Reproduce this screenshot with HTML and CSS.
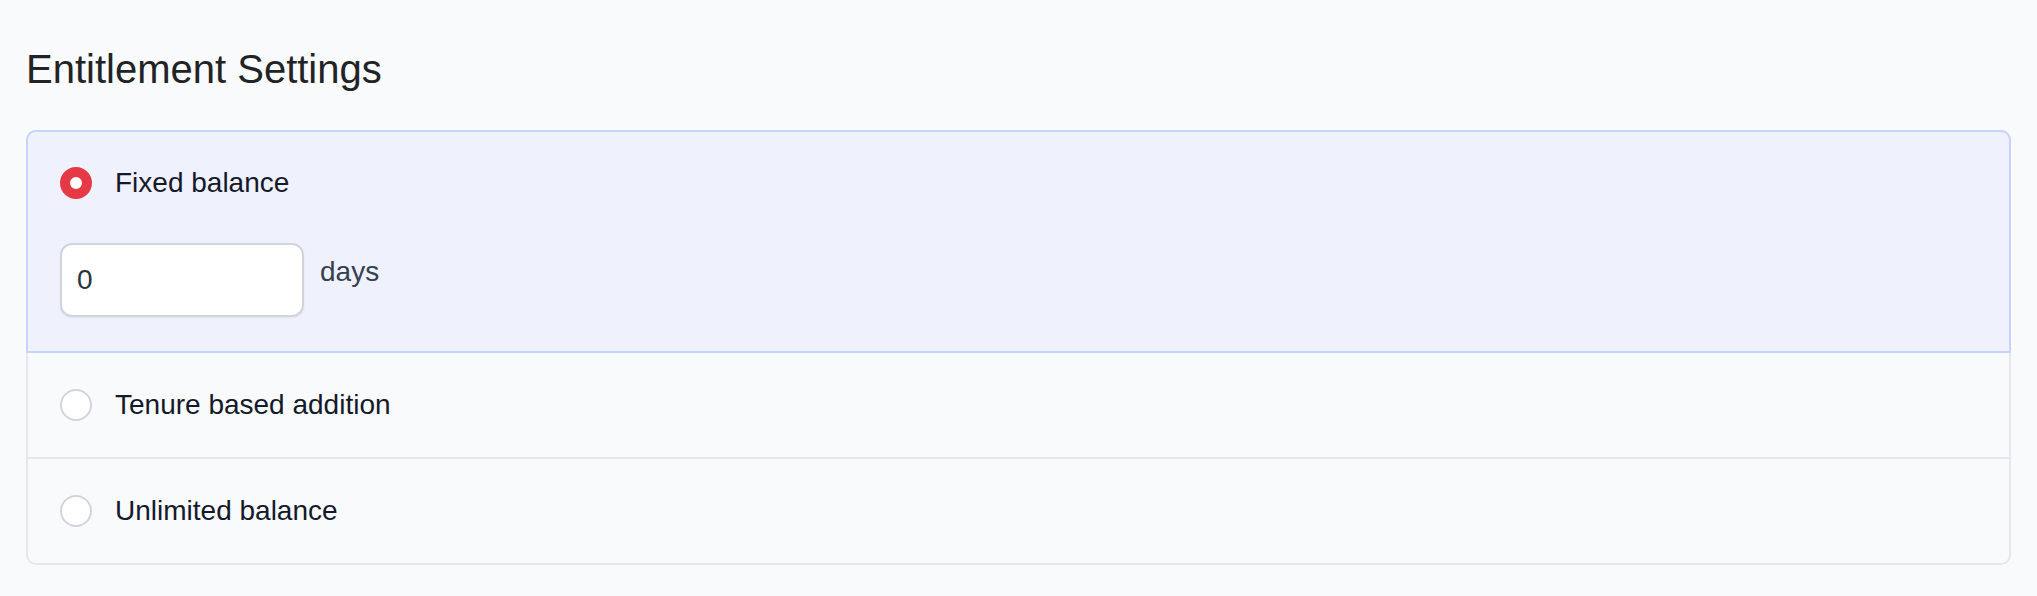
FILE: index.html
```html
<!DOCTYPE html>
<html lang="en">
<head>
<meta charset="utf-8">
<title>Entitlement Settings</title>
<link rel="stylesheet" href="styles.css">
</head>
<body>
<main class="page">
  <h1 class="title">Entitlement Settings</h1>
  <div class="card" role="radiogroup">
    <div class="option option--selected">
      <label class="option-row">
        <span class="radio radio--checked"></span>
        <span class="option-label">Fixed balance</span>
      </label>
      <div class="amount-row">
        <input class="amount-input" type="text" value="0">
        <span class="unit">days</span>
      </div>
    </div>
    <div class="option option--divided">
      <label class="option-row">
        <span class="radio"></span>
        <span class="option-label">Tenure based addition</span>
      </label>
    </div>
    <div class="option">
      <label class="option-row">
        <span class="radio"></span>
        <span class="option-label">Unlimited balance</span>
      </label>
    </div>
  </div>
</main>
</body>
</html>
```
FILE: styles.css
```css
* { box-sizing: border-box; }

html, body {
  margin: 0;
  padding: 0;
  background: #f9fafb;
}

body {
  font-family: "Liberation Sans", Arial, Helvetica, sans-serif;
  color: #111827;
}

.page {
  padding: 45px 26px 31px 26px;
}

.title {
  margin: 0 0 37px 0;
  font-size: 40px;
  line-height: 48px;
  font-weight: 400;
  color: #222326;
}

.card {
  border: 2px solid #e5e7eb;
  border-radius: 10px;
  background: #f9fafb;
  display: flex;
  flex-direction: column;
}

.option {
  padding: 36px 32px;
}

.option--divided {
  border-bottom: 2px solid #e5e7eb;
}

.option--selected {
  margin: -2px -2px 0 -2px;
  padding: 35px 32px 34px 32px;
  border: 2px solid #c7d2fe;
  border-radius: 10px 10px 0 0;
  background: #eff1fd;
}

.option-row {
  display: flex;
  align-items: center;
  gap: 23px;
  height: 32px;
  cursor: pointer;
}

.radio {
  flex: none;
  width: 32px;
  height: 32px;
  border-radius: 50%;
  border: 2px solid #d1d5db;
  background: #ffffff;
}

.radio--checked {
  border: 10px solid #e53945;
  background: #ffffff;
}

.option-label {
  font-size: 28px;
  line-height: 32px;
  color: #141a2b;
}

.amount-row {
  display: flex;
  align-items: flex-start;
  gap: 16px;
  margin-top: 44px;
}

.amount-input {
  width: 244px;
  height: 74px;
  margin: 0;
  padding: 0 15px;
  border: 2px solid #d1d5db;
  border-radius: 12px;
  background: #ffffff;
  box-shadow: 0 1px 2px rgba(0, 0, 0, 0.06);
  font-family: "Liberation Sans", Arial, Helvetica, sans-serif;
  font-size: 28px;
  color: #2b3342;
  outline: none;
}

.unit {
  padding-top: 13px;
  font-size: 28px;
  line-height: 32px;
  color: #363f50;
}
```
